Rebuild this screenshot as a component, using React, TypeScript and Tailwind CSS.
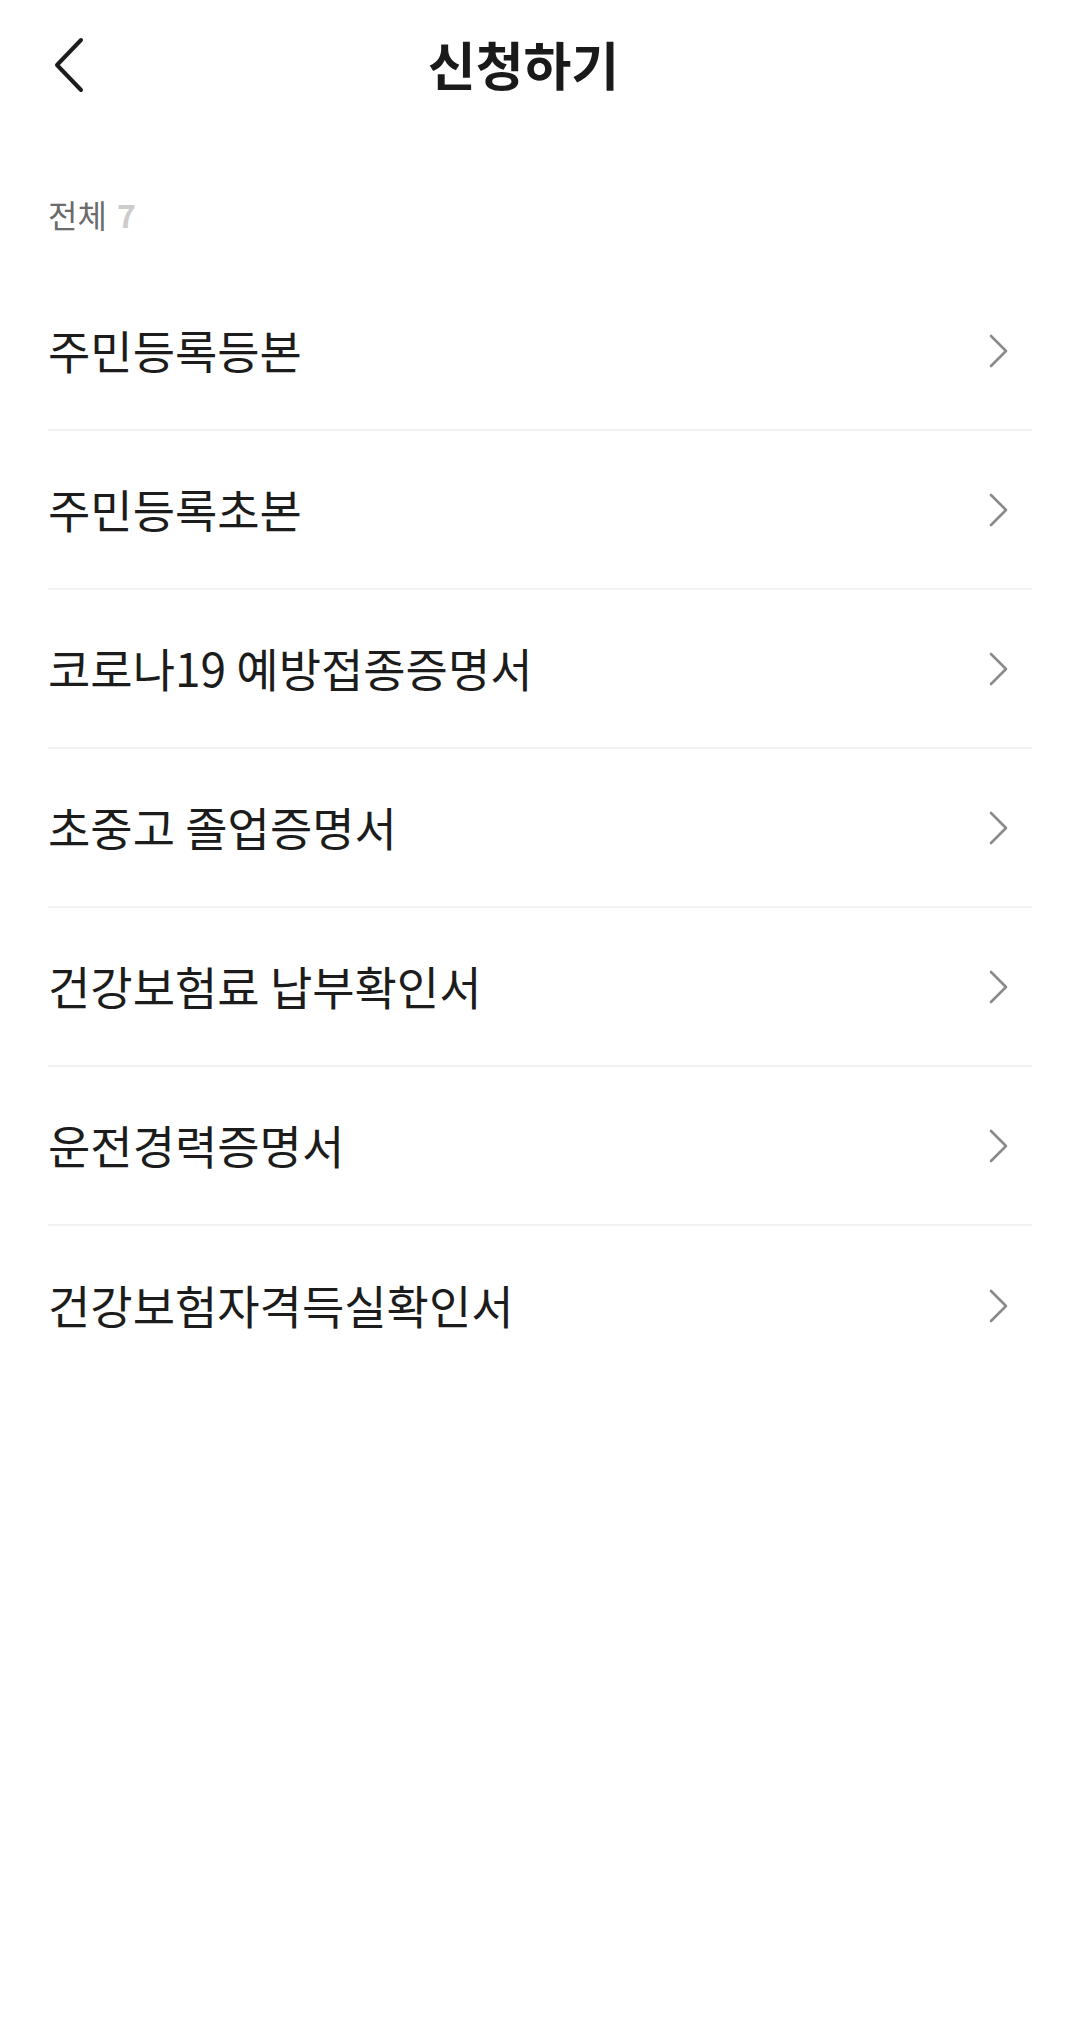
import React from 'react';

const items = [
  '주민등록등본',
  '주민등록초본',
  '코로나19 예방접종증명서',
  '초중고 졸업증명서',
  '건강보험료 납부확인서',
  '운전경력증명서',
  '건강보험자격득실확인서',
];

function BackIcon() {
  return (
    <svg width="36" height="60" viewBox="0 0 36 60" fill="none">
      <polyline points="31,5 7,30 31,55" stroke="#1c1c1c" strokeWidth="4" strokeLinecap="round" strokeLinejoin="round" />
    </svg>
  );
}

function ChevronRight() {
  return (
    <svg width="24" height="36" viewBox="0 0 24 36" fill="none">
      <polyline points="5,3 20,18 5,33" stroke="#8a8a8a" strokeWidth="2.6" strokeLinecap="round" strokeLinejoin="round" />
    </svg>
  );
}

export default function App() {
  return (
    <div
      className="min-h-[2024px] w-[1080px] bg-white"
      style={{ fontFamily: '"Noto Sans CJK KR", "Noto Sans", sans-serif' }}
    >
      {/* Header */}
      <header className="flex h-[130px] items-center pl-[50px] pr-[119px]">
        <button className="flex h-[60px] w-[36px] items-center justify-center" aria-label="뒤로">
          <BackIcon />
        </button>
        <h1 className="flex-1 pb-[2px] text-center text-[52px] font-bold leading-none text-[#1a1a1a]">신청하기</h1>
      </header>

      {/* Count */}
      <div className="px-[48px] pt-[64px]">
        <div className="flex h-[40px] items-center text-[32px] leading-none">
          <span className="text-[#6b6b6b]">전체</span>
          <span className="ml-[10px] font-bold text-[#cccccc]">{items.length}</span>
        </div>
      </div>

      {/* List */}
      <ul className="mt-[38px] px-[48px]">
        {items.map((item) => (
          <li
            key={item}
            className="flex h-[159px] items-center justify-between border-b-2 border-[#f1f1f1] last:border-b-0"
          >
            <span className="pb-[3px] text-[46px] leading-none text-[#1c1c1c]">{item}</span>
            <span className="mr-[22px] flex items-center">
              <ChevronRight />
            </span>
          </li>
        ))}
      </ul>
    </div>
  );
}
